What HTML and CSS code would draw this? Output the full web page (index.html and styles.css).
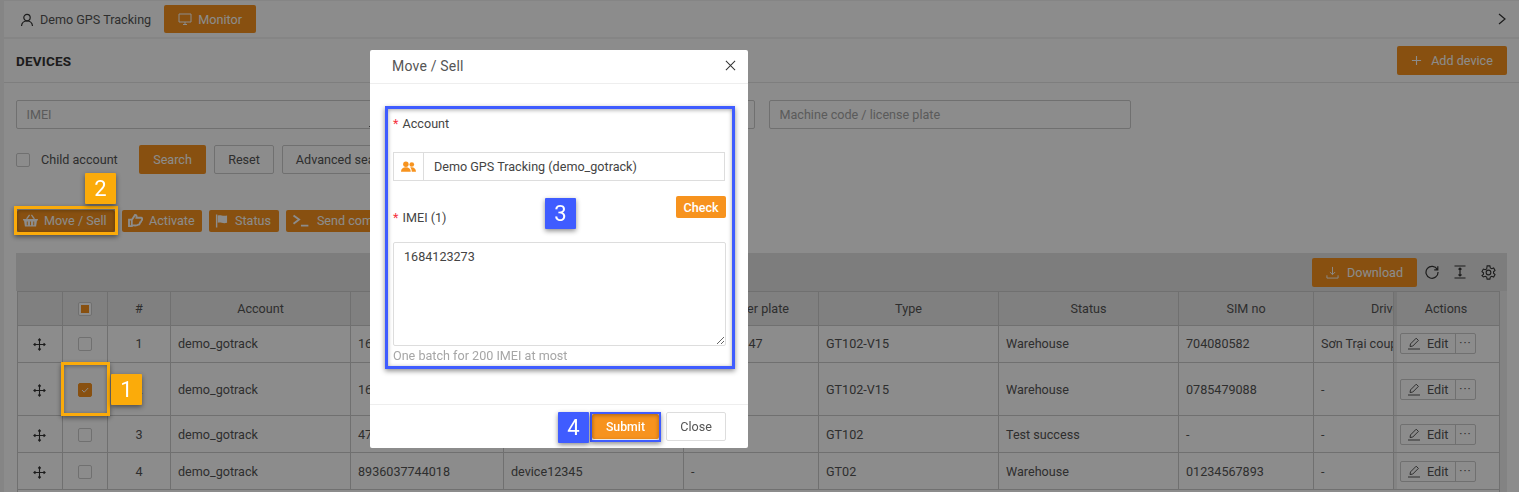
FILE: index.html
```html
<!DOCTYPE html>
<html lang="en">
<head>
    <meta charset="UTF-8">
    <meta name="viewport" content="width=device-width, initial-scale=1.0">
    <title>Devices</title>
    <link rel="stylesheet" href="styles.css">
</head>
<body>
    <svg class="defs" width="0" height="0">
        <symbol id="i-move" viewBox="0 0 14 14">
            <path d="M7 1v12M1 7h12M5.600 2.600 7 1l1.400 1.600M5.600 11.400 7 13l1.400-1.600M2.600 5.600 1 7l1.600 1.400M11.400 5.600 13 7l-1.600 1.400" fill="none" stroke="currentColor" stroke-width="1.200"/>
        </symbol>
        <symbol id="i-edit" viewBox="0 0 14 14">
            <path d="M1 13h12M3 10.500l.5-2.600L9.200 2.200l2.200 2.200-5.700 5.700z" fill="none" stroke="currentColor" stroke-width="1"/>
        </symbol>
    </svg>

    <div class="page">
        <div class="topbar">
            <svg class="icon-user" viewBox="0 0 14 14" width="14" height="14"><circle cx="7" cy="4.600" r="3.200" fill="none" stroke="currentColor" stroke-width="1.200"/><path d="M1.500 13c.3-3 2.400-5 5.500-5s5.200 2 5.500 5" fill="none" stroke="currentColor" stroke-width="1.200"/></svg>
            <span class="company">Demo GPS Tracking</span>
            <button class="btn btn-primary btn-monitor">
                <svg viewBox="0 0 14 14" width="14" height="14"><path d="M1 2h12v8H1zM5 12.500h4M7 10v2.500" fill="none" stroke="currentColor" stroke-width="1"/></svg>
                Monitor
            </button>
            <svg class="chevron" viewBox="0 0 8 12" width="8" height="12"><path d="M1 1l6 5-6 5" fill="none" stroke="currentColor" stroke-width="1.200"/></svg>
        </div>

        <div class="card">
            <div class="card-head">
                <h1>DEVICES</h1>
                <button class="btn btn-primary btn-add">
                    <svg viewBox="0 0 12 12" width="11" height="11"><path d="M6 1v10M1 6h10" fill="none" stroke="currentColor" stroke-width="1.200"/></svg>
                    Add device
                </button>
            </div>

            <div class="filters">
                <textarea class="field field-area" placeholder="IMEI"></textarea>
                <input class="field" type="text" placeholder="Device name">
                <input class="field" type="text" placeholder="Machine code / license plate">
            </div>

            <div class="search-row">
                <span class="check"></span>
                <span class="check-label">Child account</span>
                <button class="btn btn-primary btn-search">Search</button>
                <button class="btn btn-plain btn-reset">Reset</button>
                <button class="btn btn-plain btn-advanced">Advanced search</button>
            </div>

            <div class="actions-row">
                <button class="btn btn-primary btn-act btn-sell">
                    <svg viewBox="0 0 16 14" width="15" height="13"><path fill="currentColor" d="M0 5.500h16v1.500h-1l-1 6.500H2L1 7H0zM4 8v4h1V8zm3.500 0v4h1V8zM11 8v4h1V8zM3 5 6.500.5l1 .8L5 5zm10 0L9.500.5l-1 .8L11 5z"/></svg>
                    Move / Sell
                </button>
                <button class="btn btn-primary btn-act btn-activate">
                    <svg viewBox="0 0 16 14" width="15" height="13"><path fill="none" stroke="currentColor" stroke-width="2" d="M1 6h3v7H1zM4 6.500 7.500 1c1.500 0 2 1 1.500 3h5c1.500 0 1.500 2.500.5 3-.2 1.500-1 2-1.500 2-.2 1.500-1 2.500-2 2.500-1 1-4 1-7 .5"/></svg>
                    Activate
                </button>
                <button class="btn btn-primary btn-act btn-status">
                    <svg viewBox="0 0 14 14" width="13" height="14"><path fill="currentColor" d="M1 0h1.500v14H1zM3 1c3-1 5 1 10 0v8c-5 1-7-1-10 0z"/></svg>
                    Status
                </button>
                <button class="btn btn-primary btn-act btn-send">
                    <svg viewBox="0 0 18 14" width="18" height="13"><path fill="none" stroke="currentColor" stroke-width="2" d="M1 1.500 7 6l-6 4.500M9 12.500h8"/></svg>
                    Send command
                </button>
            </div>

            <div class="table-tools">
                <button class="btn btn-primary btn-download">
                    <svg viewBox="0 0 14 14" width="13" height="13"><path d="M7 1v8M4.200 6.500 7 9.300l2.800-2.800M1 10v3h12v-3" fill="none" stroke="currentColor" stroke-width="1"/></svg>
                    Download
                </button>
                <svg class="tool" viewBox="0 0 14 14" width="14" height="14"><path d="M12.300 4.500A6 6 0 1 0 13 7M12.800 1.200v3.600H9.200" fill="none" stroke="currentColor" stroke-width="1.200"/></svg>
                <svg class="tool" viewBox="0 0 14 14" width="14" height="14"><path d="M1.500 1h11M1.500 13h11M7 3v8M5.500 4.500 7 3l1.500 1.500M5.500 9.500 7 11l1.500-1.500" fill="none" stroke="currentColor" stroke-width="1.200"/></svg>
                <svg class="tool" viewBox="0 0 14 14" width="15" height="15"><path d="M5.700.8h2.600l.4 1.900 1.300.7 1.800-.6 1.300 2.300-1.400 1.200v1.400l1.400 1.200-1.300 2.300-1.800-.6-1.300.7-.4 1.900H5.700l-.4-1.900-1.300-.7-1.800.6L.900 9.900l1.400-1.200V7.300L.9 6.100l1.300-2.300 1.800.6 1.300-.7z" fill="none" stroke="currentColor" stroke-width="1"/><circle cx="7" cy="7" r="2.200" fill="none" stroke="currentColor" stroke-width="1"/></svg>
            </div>

            <div class="table-wrap">
                <table class="devices">
                    <colgroup>
                        <col class="c-drag"><col class="c-check"><col class="c-num"><col class="c-account">
                        <col class="c-imei"><col class="c-name"><col class="c-plate"><col class="c-type">
                        <col class="c-status"><col class="c-sim"><col class="c-driver"><col class="c-actions">
                    </colgroup>
                    <thead>
                        <tr>
                            <th></th>
                            <th><span class="check check-some"></span></th>
                            <th>#</th>
                            <th>Account</th>
                            <th>IMEI</th>
                            <th>Device name</th>
                            <th>Number plate</th>
                            <th>Type</th>
                            <th>Status</th>
                            <th>SIM no</th>
                            <th class="driver-head">Driver</th>
                            <th class="cell-actions">Actions</th>
                        </tr>
                    </thead>
                    <tbody>
                        <tr>
                            <td class="center"><svg class="drag" width="13" height="13"><use href="#i-move"/></svg></td>
                            <td class="center"><span class="check"></span></td>
                            <td class="center">1</td>
                            <td>demo_gotrack</td>
                            <td>1684120047</td>
                            <td>GT102</td>
                            <td>29A-1234.47</td>
                            <td>GT102-V15</td>
                            <td>Warehouse</td>
                            <td>704080582</td>
                            <td class="clip">Sơn Trại couple</td>
                            <td class="cell-actions"><span class="edit-group"><span class="edit-btn"><svg width="14" height="14"><use href="#i-edit"/></svg>Edit</span><span class="more-btn">···</span></span></td>
                        </tr>
                        <tr class="tall">
                            <td class="center"><svg class="drag" width="13" height="13"><use href="#i-move"/></svg></td>
                            <td class="center"><span class="check check-on"><svg viewBox="0 0 12 12" width="12" height="12"><path d="M3 6l2.200 2.200L9.200 4" fill="none" stroke="currentColor" stroke-width="1"/></svg></span></td>
                            <td class="center">2</td>
                            <td>demo_gotrack</td>
                            <td>1684123273</td>
                            <td>GT102</td>
                            <td>-</td>
                            <td>GT102-V15</td>
                            <td>Warehouse</td>
                            <td>0785479088</td>
                            <td>-</td>
                            <td class="cell-actions"><span class="edit-group"><span class="edit-btn"><svg width="14" height="14"><use href="#i-edit"/></svg>Edit</span><span class="more-btn">···</span></span></td>
                        </tr>
                        <tr>
                            <td class="center"><svg class="drag" width="13" height="13"><use href="#i-move"/></svg></td>
                            <td class="center"><span class="check"></span></td>
                            <td class="center">3</td>
                            <td>demo_gotrack</td>
                            <td>4700012345</td>
                            <td>GT102</td>
                            <td>-</td>
                            <td>GT102</td>
                            <td>Test success</td>
                            <td>-</td>
                            <td>-</td>
                            <td class="cell-actions"><span class="edit-group"><span class="edit-btn"><svg width="14" height="14"><use href="#i-edit"/></svg>Edit</span><span class="more-btn">···</span></span></td>
                        </tr>
                        <tr>
                            <td class="center"><svg class="drag" width="13" height="13"><use href="#i-move"/></svg></td>
                            <td class="center"><span class="check"></span></td>
                            <td class="center">4</td>
                            <td>demo_gotrack</td>
                            <td>8936037744018</td>
                            <td>device12345</td>
                            <td>-</td>
                            <td>GT02</td>
                            <td>Warehouse</td>
                            <td>01234567893</td>
                            <td>-</td>
                            <td class="cell-actions"><span class="edit-group"><span class="edit-btn"><svg width="14" height="14"><use href="#i-edit"/></svg>Edit</span><span class="more-btn">···</span></span></td>
                        </tr>
                        <tr>
                            <td colspan="12"></td>
                        </tr>
                    </tbody>
                </table>
            </div>
        </div>
    </div>

    <div class="overlay"></div>

    <!-- Move / Sell dialog -->
    <div class="modal">
        <div class="modal-head">
            <span class="modal-title">Move / Sell</span>
            <svg class="modal-close" viewBox="0 0 12 12" width="11" height="11"><path d="M1 1l10 10M11 1 1 11" fill="none" stroke="currentColor" stroke-width="1.100"/></svg>
        </div>
        <div class="modal-body">
            <div class="form-label"><span class="req">*</span> Account</div>
            <div class="account-input">
                <span class="addon">
                    <svg viewBox="0 0 16 12" width="15" height="12"><circle cx="5.200" cy="3" r="2.900" fill="currentColor"/><circle cx="11.500" cy="3.300" r="2.500" fill="currentColor"/><path fill="currentColor" d="M0 11c0-3 2-4.700 5.200-4.700s5.200 1.700 5.200 4.700zM11.500 11c0-2-.6-3.500-1.700-4.500 3-1 6.200.8 6.200 4.500z"/></svg>
                </span>
                <span class="account-value">Demo GPS Tracking (demo_gotrack)</span>
            </div>
            <div class="imei-row">
                <div class="form-label imei-label"><span class="req">*</span> IMEI (1)</div>
                <button class="btn btn-check">Check</button>
            </div>
            <textarea class="imei-box">1684123273</textarea>
            <div class="hint">One batch for 200 IMEI at most</div>
        </div>
        <div class="modal-foot">
            <button class="btn btn-submit">Submit</button>
            <button class="btn btn-close">Close</button>
        </div>
    </div>

    <!-- Tutorial marks over the screenshot -->
    <div class="mark mark-yellow mark-row"></div>
    <div class="mark mark-yellow mark-sell"></div>
    <div class="mark mark-blue mark-form"></div>
    <div class="mark mark-blue mark-submit"></div>
    <div class="badge badge-yellow badge-1">1</div>
    <div class="badge badge-yellow badge-2">2</div>
    <div class="badge badge-blue badge-3">3</div>
    <div class="badge badge-blue badge-4">4</div>
</body>
</html>
```

FILE: styles.css
```css
* {
    box-sizing: border-box;
}

html, body {
    height: 100%;
}

body {
    margin: 0;
    overflow: hidden;
    font-family: Roboto, "Liberation Sans", sans-serif;
    font-size: 12.6px;
    color: #555;
    background-color: #f2f2f2;
}

.defs {
    position: absolute;
}

.page {
    padding: 1px 0 0 4px;
    height: 100vh;
    overflow: hidden;
}

/* Top bar */
.topbar {
    display: flex;
    align-items: center;
    height: 36px;
    padding: 0 13px 0 16px;
    background: #fff;
}

.icon-user {
    color: #333;
    margin-top: 2px;
}

.company {
    margin-left: 6px;
}

.chevron {
    margin-left: auto;
    color: #333;
}

/* Buttons */
.btn {
    display: inline-flex;
    align-items: center;
    justify-content: center;
    border: 1px solid transparent;
    border-radius: 2px;
    font-family: inherit;
    font-size: 12.6px;
    padding: 0;
    white-space: nowrap;
}

.btn-primary {
    background-color: #f7931e;
    color: #fff;
}

.btn-plain {
    background-color: #fff;
    border-color: #ccc;
    color: #555;
}

.btn-monitor {
    width: 92px;
    height: 28px;
    margin-left: 13px;
    gap: 6px;
}

/* Card */
.card {
    margin-top: 2px;
    height: 460px;
    background: #fff;
}

.card-head {
    display: flex;
    align-items: center;
    justify-content: space-between;
    height: 44px;
    padding: 0 12px;
    border-bottom: 1px solid #e6e6e6;
}

.card-head h1 {
    margin: 0;
    font-size: 13.500px;
    font-weight: 700;
    color: #333;
    letter-spacing: .2px;
}

.btn-add {
    width: 110px;
    height: 29px;
    gap: 9px;
    margin-bottom: 1px;
}

.filters {
    display: grid;
    grid-template-columns: repeat(3, 362px);
    column-gap: 14.5px;
    padding: 17px 12px 0;
}

.field {
    height: 29px;
    padding: 0 9.5px;
    border: 1px solid #ccc;
    border-radius: 2px;
    font-family: inherit;
    font-size: 12.6px;
    background: #fff;
    outline: none;
}

.field::placeholder {
    color: #a6a6a6;
}

.field-area {
    display: block;
    width: 100%;
    padding-top: 5px;
    line-height: 18px;
}

.search-row {
    display: flex;
    align-items: center;
    height: 29px;
    margin-top: 16px;
    padding-left: 12px;
}

.check {
    display: inline-flex;
    align-items: center;
    justify-content: center;
    width: 14px;
    height: 14px;
    border: 1px solid #ccc;
    border-radius: 2px;
    background: #fff;
    vertical-align: middle;
}

.check-on {
    background: #f7931e;
    border-color: #f7931e;
    color: #fff;
}

.check-some::after {
    content: "";
    width: 8px;
    height: 8px;
    background: #f7931e;
}

.check-label {
    margin-left: 11px;
    width: 98px;
}

.btn-search {
    width: 67px;
    height: 29px;
}

.btn-reset {
    width: 60px;
    height: 29px;
    margin-left: 8px;
}

.btn-advanced {
    width: 124px;
    height: 29px;
    margin-left: 8px;
}

.actions-row {
    display: flex;
    gap: 7px;
    margin-top: 36px;
    padding-left: 13px;
}

.btn-act {
    height: 22px;
    gap: 6px;
    justify-content: flex-start;
    padding: 0 0 1px 5px;
}

.btn-sell {
    width: 98px;
}

.btn-activate {
    width: 80px;
}

.btn-status {
    width: 70px;
    gap: 7px;
}

.btn-send {
    width: 120px;
    gap: 7px;
}

/* Table */
.table-tools {
    display: flex;
    align-items: center;
    justify-content: flex-end;
    gap: 14px;
    height: 38px;
    margin: 21px 12px 0;
    padding-right: 11px;
    background: #e4e4e4;
}

.btn-download {
    width: 105px;
    height: 29px;
    gap: 8px;
    margin-right: -6px;
}

.tool {
    color: #333;
}

.table-wrap {
    margin: 0 12px;
    padding: 0 8px 0 1px;
    box-shadow: inset -8px 0 0 #eee;
}

.devices {
    width: 1482px;
    table-layout: fixed;
    border-collapse: collapse;
    background: #fff;
}

.c-drag { width: 45px; }
.c-check { width: 45px; }
.c-num { width: 63px; }
.c-account { width: 180px; }
.c-imei { width: 153px; }
.c-name { width: 180px; }
.c-plate { width: 135px; }
.c-type { width: 180px; }
.c-status { width: 180px; }
.c-sim { width: 135px; }
.c-driver { width: 80px; }
.c-actions { width: 106px; }

.devices th,
.devices td {
    border: 1px solid #ccc;
    padding: 0 7px;
    overflow: hidden;
    white-space: nowrap;
}

.devices th {
    height: 34px;
    background: #e9e9e9;
    font-weight: 400;
    text-align: center;
}

.devices td {
    height: 37px;
}

.devices .tall td {
    height: 53px;
}

.devices tbody tr:first-child td {
    padding-bottom: 2px;
}

.devices .center {
    text-align: center;
    padding: 0;
}

.devices .driver-head {
    text-align: left;
    padding-left: 57px;
}

.devices .clip {
    text-overflow: clip;
}

.devices .cell-actions {
    padding-left: 6px;
    box-shadow: inset 3px 0 0 rgba(0, 0, 0, .06);
}

.drag {
    color: #333;
    vertical-align: middle;
    margin-right: 2px;
}

.edit-group {
    display: inline-flex;
    height: 21px;
    border: 1px solid #ccc;
    border-radius: 2px;
    vertical-align: middle;
}

.edit-btn {
    display: flex;
    align-items: center;
    gap: 6px;
    width: 55px;
    padding-left: 6px;
    border-right: 1px solid #ccc;
}

.more-btn {
    display: flex;
    align-items: center;
    justify-content: center;
    width: 19px;
    font-size: 12px;
    letter-spacing: 1px;
}

/* Dark layer behind the dialog */
.overlay {
    position: fixed;
    inset: 0;
    background: rgba(0, 0, 0, .45);
}

/* Modal */
.modal {
    position: fixed;
    top: 50px;
    left: 370px;
    width: 378px;
    height: 398px;
    background: #fff;
    border-radius: 2px;
    display: flex;
    flex-direction: column;
    color: #444;
}

.modal-head {
    display: flex;
    align-items: center;
    justify-content: space-between;
    height: 34px;
    padding: 0 12px 2px 22px;
    border-bottom: 1px solid #eee;
}

.modal-title {
    font-size: 14px;
    letter-spacing: .2px;
    color: #555;
}

.modal-close {
    color: #333;
}

.modal-body {
    flex: 1;
    padding: 30px 22px 0 23px;
}

.form-label {
    line-height: 20px;
}

.req {
    color: #f5333f;
    margin-right: 1px;
}

.account-input {
    display: flex;
    height: 29px;
    margin-top: 18px;
    margin-right: 1px;
    border: 1px solid #ddd;
}

.addon {
    display: flex;
    align-items: center;
    justify-content: center;
    width: 30px;
    border-right: 1px solid #ddd;
    color: #f7931e;
}

.account-value {
    line-height: 27px;
    padding-left: 10px;
}

.imei-row {
    display: flex;
    justify-content: space-between;
    height: 46px;
    margin-top: 15px;
}

.imei-label {
    margin-top: 12px;
}

.btn-check {
    width: 50px;
    height: 22px;
    background: #f7931e;
    color: #fff;
    font-weight: 500;
}

.imei-box {
    display: block;
    width: 100%;
    height: 104px;
    padding: 4px 10px;
    border: 1px solid #ddd;
    border-radius: 2px;
    font-family: inherit;
    font-size: 12.6px;
    line-height: 20px;
    color: #444;
    outline: none;
}

.hint {
    margin-top: 1px;
    line-height: 18px;
    color: #a6a6a6;
}

.modal-foot {
    display: flex;
    align-items: center;
    justify-content: flex-end;
    gap: 7px;
    height: 44px;
    padding-right: 22px;
    border-top: 1px solid #eee;
}

.btn-submit {
    width: 67px;
    height: 25px;
    background: #f7931e;
    color: #fff;
    font-size: 12.3px;
    font-weight: 500;
}

.btn-close {
    width: 60px;
    height: 29px;
    background: #fff;
    border-color: #ddd;
    color: #555;
}

/* Tutorial marks */
.mark {
    position: fixed;
    border: 3px solid;
    box-shadow: 0 2px 5px rgba(0, 0, 0, .45), inset 0 1px 4px rgba(0, 0, 0, .35);
}

.mark-yellow {
    border-color: #fbab0a;
}

.mark-blue {
    border-color: #3f5cff;
}

.mark-row {
    left: 61px;
    top: 362px;
    width: 49px;
    height: 54px;
}

.mark-sell {
    left: 14px;
    top: 206px;
    width: 104px;
    height: 29px;
}

.mark-form {
    left: 385px;
    top: 106px;
    width: 350px;
    height: 263px;
}

.mark-submit {
    left: 590px;
    top: 412px;
    width: 71px;
    height: 30px;
    border-width: 2px;
}

.badge {
    position: fixed;
    display: flex;
    align-items: center;
    justify-content: center;
    width: 31px;
    height: 31px;
    border-radius: 1px;
    color: #fff;
    font-size: 22px;
    box-shadow: 0 2px 5px rgba(0, 0, 0, .45);
}

.badge-yellow {
    background: #fbab0a;
}

.badge-blue {
    background: #3f5cff;
}

.badge-1 {
    left: 111px;
    top: 374px;
}

.badge-2 {
    left: 85px;
    top: 173px;
}

.badge-3 {
    left: 545px;
    top: 198px;
}

.badge-4 {
    left: 558px;
    top: 412px;
}
```
